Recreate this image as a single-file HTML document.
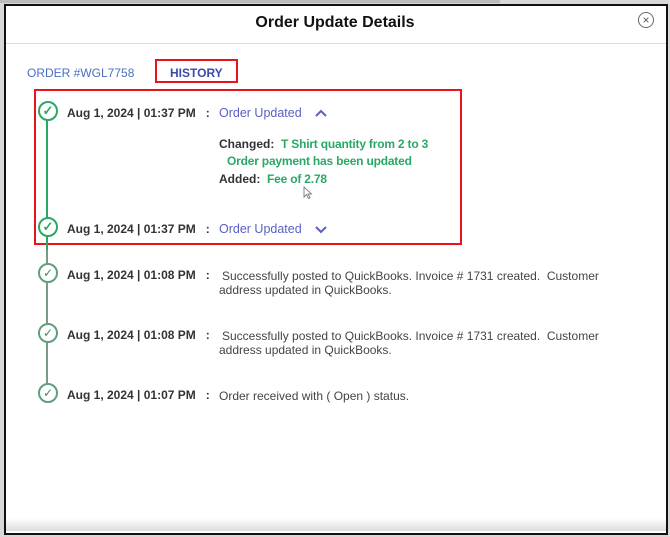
<!DOCTYPE html>
<html><head><style>
body{margin:0;width:670px;height:537px;background:#d8d8d8;position:relative;overflow:hidden;font-family:"Liberation Sans",Arial,sans-serif}
.a{position:absolute;white-space:nowrap}
.d{font-weight:bold;font-size:12px;color:#333}
.t{font-size:12px;color:#444}
.g{color:#2aa865;font-weight:bold;font-size:12px;letter-spacing:-0.2px}
.b{color:#5a5fc4;font-size:12.5px}
.c{position:absolute;width:16px;height:16px;border:2px solid #2aa865;border-radius:50%;background:#fff}
</style></head><body>
<div class="a" style="left:0;top:0;width:500px;height:3px;background:#bbb"></div>
<div style="position:absolute;left:4px;top:4px;width:660px;height:527px;border:2px solid #111;background:#fff"></div>
<div style="position:absolute;left:6px;top:518px;width:660px;height:13px;background:linear-gradient(#fff,#ddd)"></div>
<div class="a" style="left:0;width:670px;top:14px;text-align:center;font-weight:bold;font-size:16px;color:#111">Order Update Details</div>
<div class="a" style="left:638px;top:12px;width:14px;height:14px;border:1px solid #666;border-radius:50%;font-size:12px;line-height:14px;text-align:center;color:#555">×</div>
<div class="a" style="left:6px;top:43px;width:660px;height:1px;background:#ddd"></div>
<div class="a" style="left:27px;top:66px;font-size:12px;color:#4a6fc0">ORDER #WGL7758</div>
<div class="a" style="left:155px;top:59px;width:79px;height:20px;border:2px solid #e8141b"></div>
<div class="a" style="left:170px;top:66px;font-size:12px;font-weight:bold;color:#3a4aa8">HISTORY</div>
<div class="a" style="left:34px;top:89px;width:424px;height:152px;border:2px solid #e8141b"></div>
<div class="a" style="left:46px;top:110px;width:2px;height:140px;background:#2aa865"></div>
<div class="a" style="left:46px;top:250px;width:2px;height:140px;background:#7a9a88"></div>
<div class="c" style="left:38px;top:101px;line-height:16px;text-align:center;color:#2aa865;font-size:13px;font-weight:bold">✓</div>
<div class="c" style="left:38px;top:217px;line-height:16px;text-align:center;color:#2aa865;font-size:13px;font-weight:bold">✓</div>
<div class="c" style="left:38px;top:263px;border-color:#5fa07c;line-height:16px;text-align:center;color:#3a8a5c;font-size:12px">✓</div>
<div class="c" style="left:38px;top:323px;border-color:#5fa07c;line-height:16px;text-align:center;color:#3a8a5c;font-size:12px">✓</div>
<div class="c" style="left:38px;top:383px;border-color:#5fa07c;line-height:16px;text-align:center;color:#3a8a5c;font-size:12px">✓</div>
<div class="a d" style="left:67px;top:106px">Aug 1, 2024 | 01:37 PM &nbsp;&nbsp;:</div>
<div class="a b" style="left:219px;top:106px">Order Updated</div>
<svg class="a" style="left:314px;top:108px" width="14" height="10"><path d="M2 8 L7 3 L12 8" fill="none" stroke="#5a5fc4" stroke-width="2"/></svg>
<div class="a d" style="left:219px;top:137px">Changed: &nbsp;<span class="g">T Shirt quantity from 2 to 3</span></div>
<div class="a g" style="left:227px;top:154px">Order payment has been updated</div>
<div class="a d" style="left:219px;top:172px">Added: &nbsp;<span class="g">Fee of 2.78</span></div>
<svg class="a" style="left:303px;top:186px" width="10" height="14"><path d="M1 1 L1 11 L3.5 8.5 L5.5 12.5 L7 11.7 L5 8 L8.5 8 Z" fill="#fff" stroke="#666" stroke-width="0.8"/></svg>
<div class="a d" style="left:67px;top:222px">Aug 1, 2024 | 01:37 PM &nbsp;&nbsp;:</div>
<div class="a b" style="left:219px;top:222px">Order Updated</div>
<svg class="a" style="left:314px;top:224px" width="14" height="10"><path d="M2 3 L7 8 L12 3" fill="none" stroke="#5a5fc4" stroke-width="2"/></svg>
<div class="a d" style="left:67px;top:268px">Aug 1, 2024 | 01:08 PM &nbsp;&nbsp;:</div>
<div class="a t" style="left:222px;top:269px">Successfully posted to QuickBooks. Invoice # 1731 created.&nbsp; Customer</div>
<div class="a t" style="left:219px;top:283px">address updated in QuickBooks.</div>
<div class="a d" style="left:67px;top:328px">Aug 1, 2024 | 01:08 PM &nbsp;&nbsp;:</div>
<div class="a t" style="left:222px;top:329px">Successfully posted to QuickBooks. Invoice # 1731 created.&nbsp; Customer</div>
<div class="a t" style="left:219px;top:343px">address updated in QuickBooks.</div>
<div class="a d" style="left:67px;top:388px">Aug 1, 2024 | 01:07 PM &nbsp;&nbsp;:</div>
<div class="a t" style="left:219px;top:389px">Order received with ( Open ) status.</div>
</body></html>
